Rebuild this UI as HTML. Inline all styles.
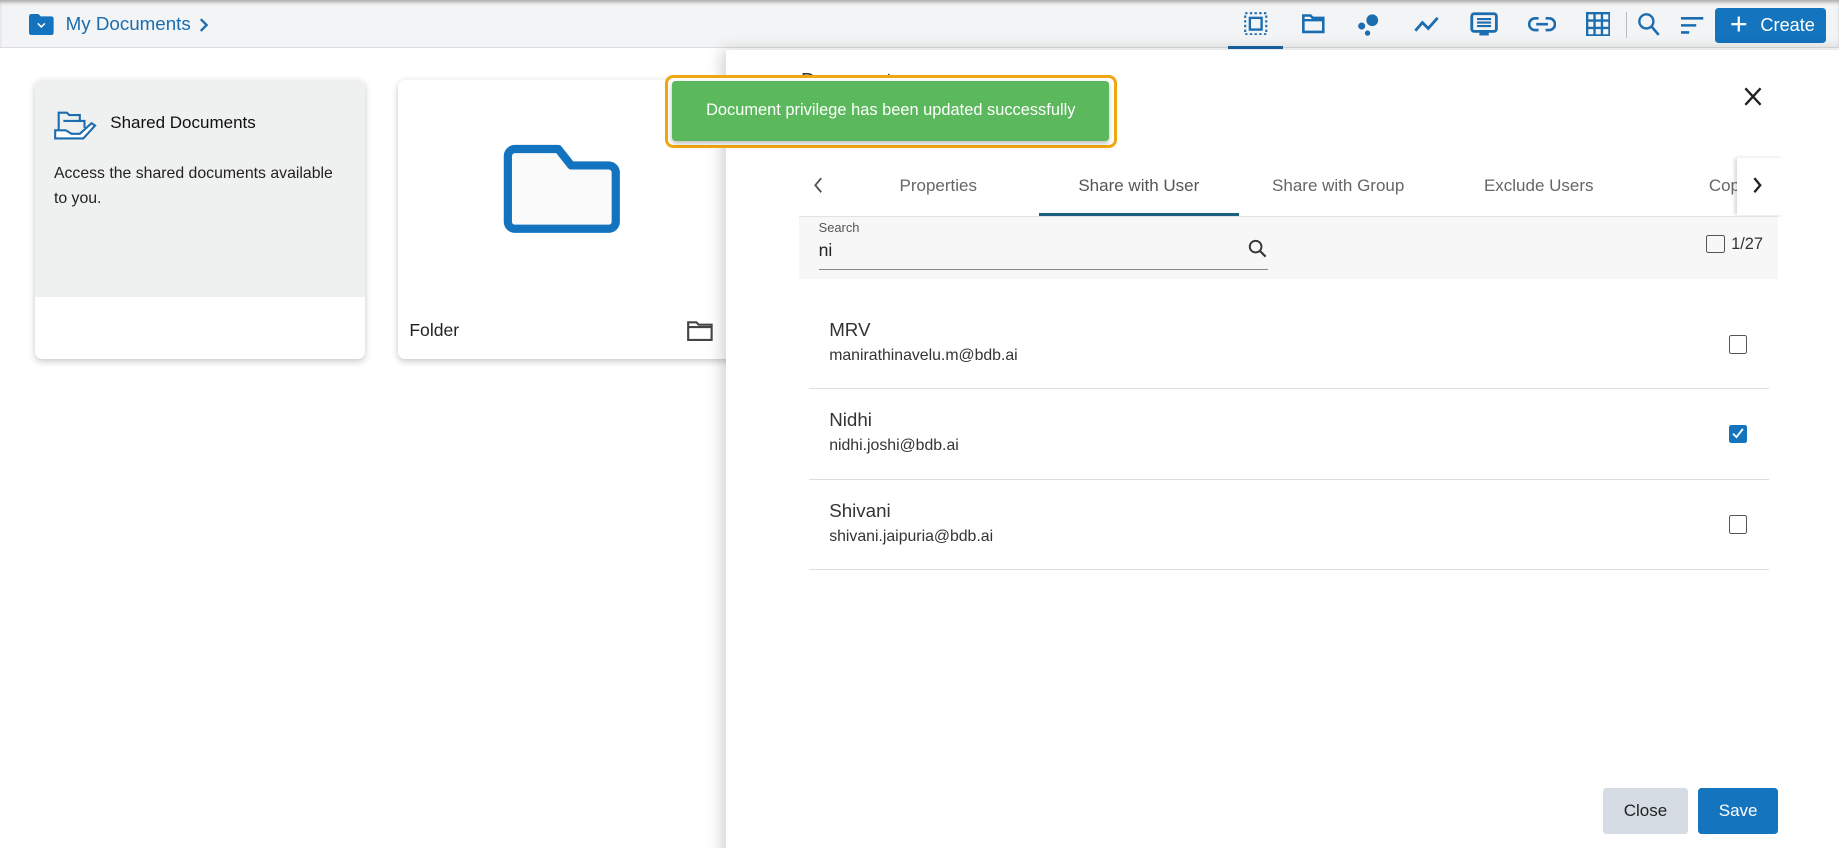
<!DOCTYPE html>
<html><head><meta charset="utf-8"><style>
*{box-sizing:border-box;margin:0;padding:0}
html,body{width:1839px;height:848px;overflow:hidden;background:#fff}
#root{zoom:1.17283;width:1568px;height:723px;position:relative;font-family:"Liberation Sans",sans-serif;color:#222;overflow:hidden}
.abs{position:absolute}
.top{left:0;top:0;width:1568px;height:41px;background:#f3f4f5;border-bottom:1px solid #ddd;box-shadow:inset 0 3px 3px -1px #aaa}
.ico{position:absolute;top:10px}
.tab{position:absolute;top:150px;font-size:14.5px;color:#666;transform:translateX(-50%);white-space:nowrap}
.row{position:absolute;left:690px;width:818px;height:77px;border-bottom:1px solid #ddd}
.row .n{position:absolute;left:17px;top:17px;font-size:16px;color:#333}
.row .e{position:absolute;left:17px;top:41px;font-size:13.5px;color:#333}
.cb{position:absolute;width:16px;height:16px;border:1.6px solid #555;border-radius:2px}
</style></head><body><div id="root">
<div class="abs top"></div>
<svg class="abs" style="left:25px;top:12px" width="21" height="18" viewBox="0 0 21 18"><path d="M0 2a2 2 0 012-2h6l2 2h9a2 2 0 012 2v12a2 2 0 01-2 2H2a2 2 0 01-2-2z" fill="#1473be"/><path d="M7.5 8l3 3 3-3" stroke="#fff" stroke-width="1.3" fill="none"/></svg>
<div class="abs" style="left:56px;top:11px;font-size:16px;color:#1b6db0">My Documents</div>
<svg class="abs" style="left:170px;top:15px" width="8" height="12"><path d="M1.5 1l5 5-5 5" stroke="#1b6db0" stroke-width="2" fill="none"/></svg>
<div class="abs" style="left:1047px;top:39px;width:47px;height:3px;background:#1565a8"></div>
<svg class="ico" style="left:1061px" width="20" height="20"><rect x="1" y="1" width="18" height="18" fill="none" stroke="#1b6db0" stroke-width="1.8" stroke-dasharray="2 2"/><rect x="5" y="5" width="10" height="10" fill="none" stroke="#1b6db0" stroke-width="2"/></svg>
<svg class="ico" style="left:1109px" width="22" height="20"><path d="M2 3h6l2 2h9v12H2z" fill="none" stroke="#1b6db0" stroke-width="2.2"/><path d="M2 7h17" stroke="#1b6db0" stroke-width="2"/></svg>
<svg class="ico" style="left:1157px" width="20" height="22"><circle cx="13" cy="7" r="5" fill="#1b6db0"/><circle cx="4" cy="12" r="3" fill="#1b6db0"/><circle cx="9" cy="18" r="2.3" fill="#1b6db0"/></svg>
<svg class="ico" style="left:1205px" width="24" height="20"><path d="M2 16l6-7 5 5 8-9" fill="none" stroke="#1b6db0" stroke-width="2.4"/></svg>
<svg class="ico" style="left:1253px" width="24" height="22"><rect x="1.5" y="1.5" width="21" height="15" rx="2" fill="none" stroke="#1b6db0" stroke-width="2.4"/><path d="M6 6h12M6 9h12M6 12h12" stroke="#1b6db0" stroke-width="1.8"/><rect x="8" y="17" width="8" height="3" fill="#1b6db0"/></svg>
<svg class="ico" style="left:1303px;top:14px" width="24" height="14"><path d="M9 2H6a5 5 0 000 10h3M15 2h3a5 5 0 010 10h-3M7 7h10" fill="none" stroke="#1b6db0" stroke-width="2.2"/></svg>
<svg class="ico" style="left:1352px" width="21" height="21"><rect x="1" y="1" width="19" height="19" fill="none" stroke="#1b6db0" stroke-width="2"/><path d="M7.3 1v19M13.6 1v19M1 7.3h19M1 13.6h19" stroke="#1b6db0" stroke-width="2"/></svg>
<div class="abs" style="left:1386px;top:10px;width:1px;height:22px;background:#bbb"></div>
<svg class="ico" style="left:1396px" width="20" height="22"><circle cx="8" cy="8" r="6" fill="none" stroke="#1b6db0" stroke-width="2"/><path d="M12.5 12.5l6 7" stroke="#1b6db0" stroke-width="2.2"/></svg>
<svg class="ico" style="left:1433px;top:14px" width="20" height="16"><path d="M0 2h19M0 8h13M0 14h7" stroke="#1b6db0" stroke-width="2.2"/></svg>
<div class="abs" style="left:1462px;top:7px;width:95px;height:30px;background:#1474be;border-radius:3px;color:#fff;font-size:15.5px;line-height:30px"><span style="position:absolute;left:13px;top:-1px;font-size:26px;font-weight:300">+</span><span style="position:absolute;left:39px">Create</span></div>
<div class="abs" style="left:30px;top:68px;width:281px;height:238px;border-radius:6px;background:#fff;box-shadow:0 2px 6px rgba(0,0,0,.22);overflow:hidden"><div style="height:185px;background:#eff0f0"></div></div>
<svg class="abs" style="left:46px;top:92px" width="37" height="28" viewBox="0 0 37 28"><path d="M4 22V4h7l2 2h9v6M8 11h18v6" fill="none" stroke="#1b6db0" stroke-width="1.8"/><path d="M1 19h9l5 3h7l10-9 3 2-10 11H1z" fill="#fff" stroke="#1b6db0" stroke-width="1.8"/></svg>
<div class="abs" style="left:94px;top:96px;font-size:14.5px;color:#111">Shared Documents</div>
<div class="abs" style="left:46px;top:137px;font-size:13.5px;line-height:22px;color:#222;width:246px">Access the shared documents available to you.</div>
<div class="abs" style="left:339px;top:68px;width:290px;height:238px;border-radius:6px;background:#fff;box-shadow:0 2px 6px rgba(0,0,0,.22)"></div>
<svg class="abs" style="left:428px;top:121px" width="104" height="80"><path d="M5 12a6 6 0 016-6h37l11 14h32a6 6 0 016 6v42a6 6 0 01-6 6H11a6 6 0 01-6-6z" fill="#fafafa" stroke="#1473be" stroke-width="7" stroke-linejoin="round"/></svg>
<div class="abs" style="left:349px;top:273px;font-size:15px;color:#222">Folder</div>
<svg class="abs" style="left:586px;top:273px" width="22" height="18"><path d="M1 2h7l2 2h11v13H1z M1 6h20" fill="none" stroke="#444" stroke-width="1.8"/></svg>
<div class="abs" style="left:619px;top:43px;width:960px;height:690px;background:#fff;box-shadow:-4px 0 12px rgba(0,0,0,.18)"></div>
<div class="abs" style="left:683px;top:60px;font-size:17px;color:#333">Document</div>
<div class="abs" style="left:718px;top:109px;font-size:14px;color:#888">Report</div>
<svg class="abs" style="left:1486px;top:73px" width="17" height="18"><path d="M2 2l13 14M15 2L2 16" stroke="#222" stroke-width="2"/></svg>
<svg class="abs" style="left:693px;top:151px" width="9" height="14"><path d="M7 1L2 7l5 6" stroke="#555" stroke-width="1.6" fill="none"/></svg>
<div class="tab" style="left:800px">Properties</div>
<div class="tab" style="left:971px;color:#555">Share with User</div>
<div class="tab" style="left:1141px">Share with Group</div>
<div class="tab" style="left:1312px">Exclude Users</div>
<div class="tab" style="left:1457px;transform:none">Cop</div>
<div class="abs" style="left:1481px;top:135px;width:40px;height:48px;background:#fff;box-shadow:-2px 0 3px rgba(0,0,0,.15)"></div>
<svg class="abs" style="left:1494px;top:151px" width="9" height="14"><path d="M2 1l5 6-5 6" stroke="#222" stroke-width="2" fill="none"/></svg>
<div class="abs" style="left:886px;top:182px;width:170px;height:2px;background:#1d5f7e"></div>
<div class="abs" style="left:681px;top:184px;width:835px;height:54px;background:#f7f7f7;border-top:1px solid #e2e2e2"></div>
<div class="abs" style="left:698px;top:188px;font-size:11px;color:#555">Search</div>
<div class="abs" style="left:698px;top:205px;font-size:15px;color:#222">ni</div>
<div class="abs" style="left:698px;top:229px;width:383px;height:1px;background:#888"></div>
<svg class="abs" style="left:1064px;top:204px" width="16" height="16"><circle cx="6.5" cy="6.5" r="5" fill="none" stroke="#333" stroke-width="1.6"/><path d="M10 10l5 5" stroke="#333" stroke-width="1.8"/></svg>
<div class="cb" style="left:1455px;top:200px"></div>
<div class="abs" style="left:1476px;top:200px;font-size:14px;color:#333">1/27</div>
<div class="row" style="top:255px"><div class="n">MRV</div><div class="e">manirathinavelu.m@bdb.ai</div><div class="cb" style="left:784px;top:31px"></div></div>
<div class="row" style="top:332px"><div class="n">Nidhi</div><div class="e">nidhi.joshi@bdb.ai</div><div class="cb" style="left:784px;top:30px;background:#1474be;border-color:#1474be"><svg width="13" height="13" style="position:absolute;left:0;top:0"><path d="M2.5 6.5l3 3 5.5-7" stroke="#fff" stroke-width="1.6" fill="none"/></svg></div></div>
<div class="row" style="top:409px"><div class="n">Shivani</div><div class="e">shivani.jaipuria@bdb.ai</div><div class="cb" style="left:784px;top:30px"></div></div>
<div class="abs" style="left:1367px;top:672px;width:72px;height:39px;background:#d5dce3;border-radius:3px;font-size:14.5px;line-height:39px;text-align:center;color:#222">Close</div>
<div class="abs" style="left:1448px;top:672px;width:68px;height:39px;background:#1474be;border-radius:3px;font-size:14.5px;line-height:39px;text-align:center;color:#fff">Save</div>
<div class="abs" style="left:567px;top:64px;width:385px;height:62px;border:3px solid #f0a70f;border-radius:7px;background:#fff"></div>
<div class="abs" style="left:573px;top:69px;width:373px;height:51px;background:#5cb85c;border-radius:3px;color:#fff;font-size:14px;line-height:51px;text-align:center;box-shadow:0 2px 4px rgba(0,0,0,.25)">Document privilege has been updated successfully</div>
</div></body></html>
